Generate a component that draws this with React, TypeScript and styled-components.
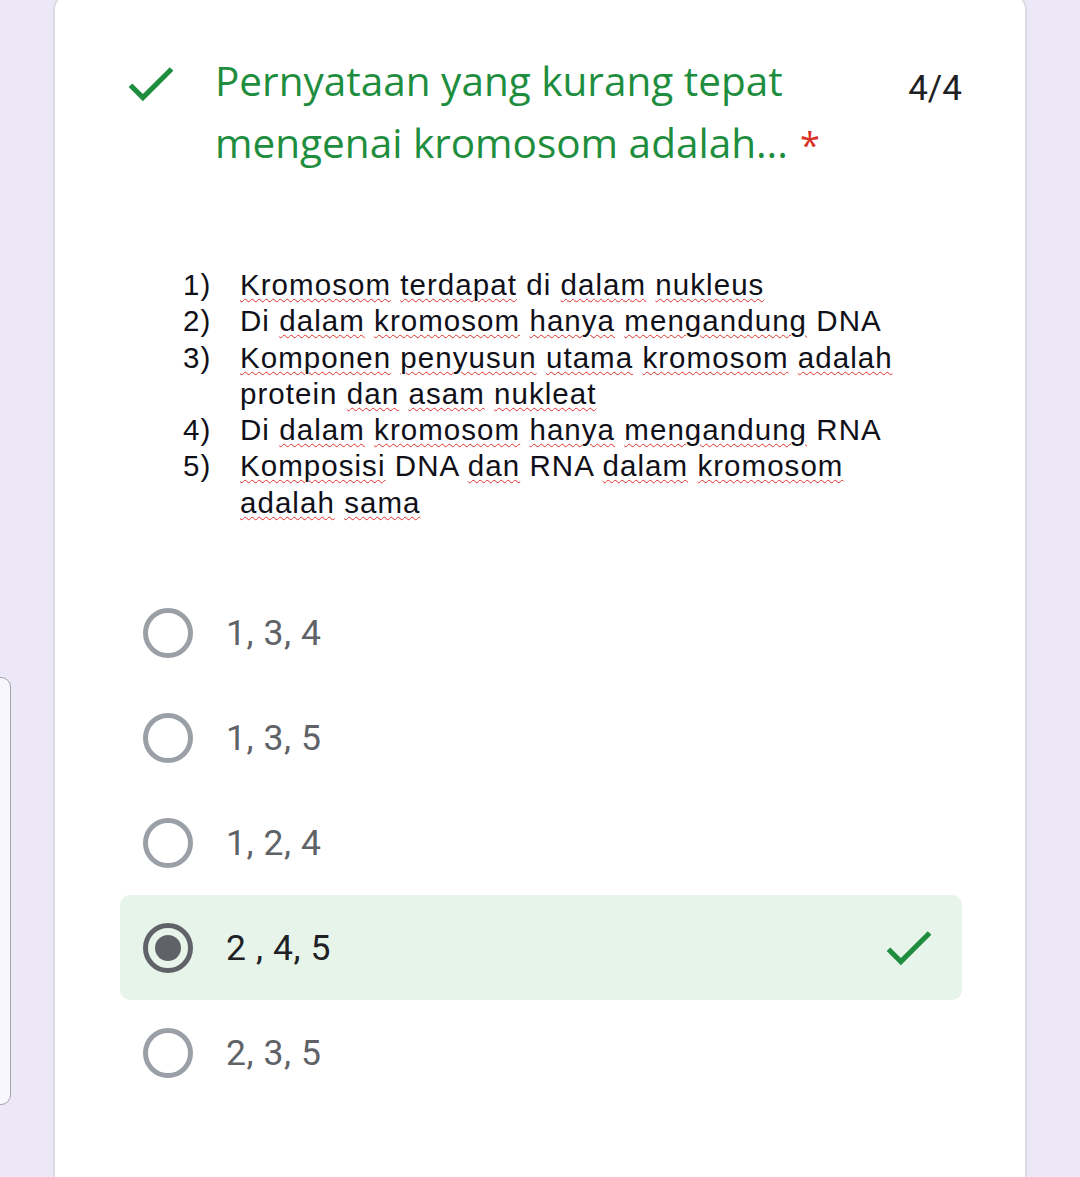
import React from "react";
import styled, { createGlobalStyle } from "styled-components";

const GlobalStyle = createGlobalStyle`
  html, body { margin: 0; padding: 0; background: #ece8f7; }
  body { font-family: Roboto, "Noto Sans", sans-serif; overflow: hidden; }
`;

const Page = styled.div`
  position: relative;
  height: 1177px;
  overflow: hidden;
  background: #ece8f7;
`;

const SideTab = styled.div`
  position: absolute;
  left: -20px;
  top: 677px;
  width: 29px;
  height: 426px;
  background: #f8f7fd;
  border: 1.5px solid #a4a3ab;
  border-radius: 10px;
`;

const Card = styled.section`
  box-sizing: border-box;
  margin: -8px 0 0 53px;
  width: 974px;
  min-height: 1300px;
  background: #fff;
  border: 2px solid #dcdae2;
  border-radius: 18px;
  padding: 56px 63px 120px 65px;
`;

const Header = styled.div`
  display: flex;
  align-items: flex-start;
`;

const CheckIcon = styled.svg<{ $top?: number }>`
  flex: none;
  width: 61px;
  height: 61px;
  margin-top: ${(p) => p.$top ?? 0}px;
  fill: #1e8e3e;
`;

const Title = styled.h1`
  flex: 1;
  margin: 0 0 0 34px;
  max-width: 650px;
  font-family: "Open Sans", sans-serif;
  font-weight: 400;
  font-size: 40.5px;
  line-height: 62px;
  color: #1e8e3e;
`;

const Required = styled.span`
  color: #d93025;
  margin-left: 12px;
  font-size: 36px;
`;

const Score = styled.div`
  margin-left: auto;
  margin-top: 8px;
  font-family: Roboto, sans-serif;
  font-size: 35px;
  line-height: 62px;
  color: #202124;
`;

const Statements = styled.ol`
  list-style: none;
  margin: 91px 0 0 63px;
  padding: 0;
  font-family: "Liberation Sans", Arial, sans-serif;
  font-size: 29.5px;
  letter-spacing: 1.05px;
  line-height: 36.3px;
  color: #101018;
`;

const Statement = styled.li`
  display: grid;
  grid-template-columns: 57px 1fr;
`;

const Num = styled.span``;

const Err = styled.span`
  text-decoration: underline wavy #e0302c;
  text-decoration-thickness: 1.3px;
  text-underline-offset: 3px;
`;

const Options = styled.div`
  margin-top: 59px;
  display: flex;
  flex-direction: column;
`;

const Option = styled.div<{ $correct?: boolean }>`
  display: flex;
  align-items: center;
  height: 105px;
  padding: 0 23px;
  border-radius: 10px;
  background: ${(p) => (p.$correct ? "#e6f4ea" : "transparent")};
`;

const Radio = styled.span<{ $checked?: boolean }>`
  box-sizing: border-box;
  flex: none;
  width: 50px;
  height: 50px;
  border-radius: 50%;
  border: 5px solid ${(p) => (p.$checked ? "#5f6368" : "#9aa0a6")};
  display: flex;
  align-items: center;
  justify-content: center;
  &::after {
    content: "";
    display: ${(p) => (p.$checked ? "block" : "none")};
    width: 26px;
    height: 26px;
    border-radius: 50%;
    background: #5f6368;
  }
`;

const OptionLabel = styled.span<{ $checked?: boolean }>`
  margin-left: 33px;
  font-family: Roboto, sans-serif;
  font-size: 35.5px;
  letter-spacing: 0.6px;
  color: ${(p) => (p.$checked ? "#202124" : "#5f6368")};
`;

const Trailing = styled.span`
  margin-left: auto;
  display: flex;
`;

const Check = ({ top }: { top?: number }) => (
  <CheckIcon viewBox="0 0 24 24" $top={top}>
    <path d="M9 16.17L4.83 12l-1.42 1.41L9 19 21 7l-1.41-1.41z" />
  </CheckIcon>
);

const E = ({ children }: { children: React.ReactNode }) => <Err>{children}</Err>;

const options = [
  { label: "1, 3, 4" },
  { label: "1, 3, 5" },
  { label: "1, 2, 4" },
  { label: "2 , 4, 5", checked: true },
  { label: "2, 3, 5" },
];

export default function App() {
  return (
    <>
      <GlobalStyle />
      <Page>
        <SideTab />
        <Card>
          <Header>
            <Check top={3} />
            <Title>
              Pernyataan yang kurang tepat mengenai kromosom adalah...
              <Required>*</Required>
            </Title>
            <Score>4/4</Score>
          </Header>

          <Statements>
            <Statement>
              <Num>1)</Num>
              <span>
                <E>Kromosom</E> <E>terdapat</E> di <E>dalam</E> <E>nukleus</E>
              </span>
            </Statement>
            <Statement>
              <Num>2)</Num>
              <span>
                Di <E>dalam</E> <E>kromosom</E> <E>hanya</E> <E>mengandung</E> DNA
              </span>
            </Statement>
            <Statement>
              <Num>3)</Num>
              <span>
                <E>Komponen</E> <E>penyusun</E> <E>utama</E> <E>kromosom</E> <E>adalah</E>
                <br />
                protein <E>dan</E> <E>asam</E> <E>nukleat</E>
              </span>
            </Statement>
            <Statement>
              <Num>4)</Num>
              <span>
                Di <E>dalam</E> <E>kromosom</E> <E>hanya</E> <E>mengandung</E> RNA
              </span>
            </Statement>
            <Statement>
              <Num>5)</Num>
              <span>
                <E>Komposisi</E> DNA <E>dan</E> RNA <E>dalam</E> <E>kromosom</E>
                <br />
                <E>adalah</E> <E>sama</E>
              </span>
            </Statement>
          </Statements>

          <Options>
            {options.map((o) => (
              <Option key={o.label} $correct={o.checked}>
                <Radio $checked={o.checked} />
                <OptionLabel $checked={o.checked}>{o.label}</OptionLabel>
                {o.checked && (
                  <Trailing>
                    <Check />
                  </Trailing>
                )}
              </Option>
            ))}
          </Options>
        </Card>
      </Page>
    </>
  );
}
